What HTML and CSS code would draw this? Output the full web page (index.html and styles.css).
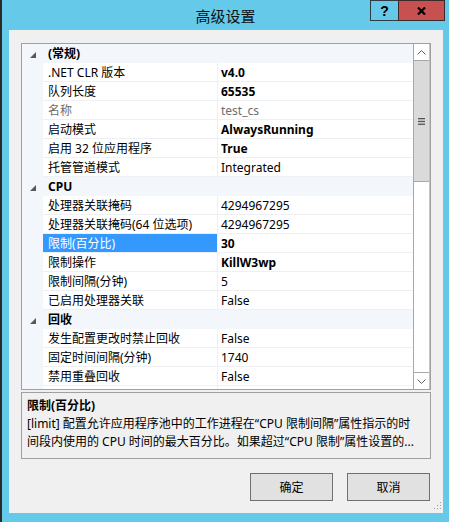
FILE: index.html
```html
<!DOCTYPE html>
<html lang="zh-CN">
<head>
<meta charset="utf-8">
<title>高级设置</title>
<link rel="stylesheet" href="styles.css">
</head>
<body>
<div class="window">
  <div class="titlebar">
    <div></div>
    <div class="title">高级设置</div>
    <div class="caption-buttons">
      <span class="cap help">?</span>
      <span class="cap close">
        <svg width="9" height="8" viewBox="0 0 9 8"><path d="M1 0.5 L8 7.5 M8 0.5 L1 7.5" stroke="#000" stroke-width="2.2" fill="none"/></svg>
      </span>
    </div>
  </div>

  <div class="client">
    <div class="grid">
      <div class="rows">
        <div class="cat">
          <span class="exp"><svg width="6" height="6" viewBox="0 0 6 6"><polygon points="6,0 6,6 0,6" fill="#595959"/></svg></span>
          <span class="label">(常规)</span>
        </div>
        <div class="prop"><span class="gutter"></span><span class="name">.NET CLR 版本</span><span class="val bold">v4.0</span></div>
        <div class="prop"><span class="gutter"></span><span class="name">队列长度</span><span class="val bold">65535</span></div>
        <div class="prop readonly"><span class="gutter"></span><span class="name">名称</span><span class="val">test_cs</span></div>
        <div class="prop"><span class="gutter"></span><span class="name">启动模式</span><span class="val bold">AlwaysRunning</span></div>
        <div class="prop"><span class="gutter"></span><span class="name">启用 32 位应用程序</span><span class="val bold">True</span></div>
        <div class="prop"><span class="gutter"></span><span class="name">托管管道模式</span><span class="val">Integrated</span></div>

        <div class="cat">
          <span class="exp"><svg width="6" height="6" viewBox="0 0 6 6"><polygon points="6,0 6,6 0,6" fill="#595959"/></svg></span>
          <span class="label">CPU</span>
        </div>
        <div class="prop"><span class="gutter"></span><span class="name">处理器关联掩码</span><span class="val">4294967295</span></div>
        <div class="prop"><span class="gutter"></span><span class="name">处理器关联掩码(64 位选项)</span><span class="val">4294967295</span></div>
        <div class="prop selected"><span class="gutter"></span><span class="name">限制(百分比)</span><span class="val bold">30</span></div>
        <div class="prop"><span class="gutter"></span><span class="name">限制操作</span><span class="val bold">KillW3wp</span></div>
        <div class="prop"><span class="gutter"></span><span class="name">限制间隔(分钟)</span><span class="val">5</span></div>
        <div class="prop"><span class="gutter"></span><span class="name">已启用处理器关联</span><span class="val">False</span></div>

        <div class="cat">
          <span class="exp"><svg width="6" height="6" viewBox="0 0 6 6"><polygon points="6,0 6,6 0,6" fill="#595959"/></svg></span>
          <span class="label">回收</span>
        </div>
        <div class="prop"><span class="gutter"></span><span class="name">发生配置更改时禁止回收</span><span class="val">False</span></div>
        <div class="prop"><span class="gutter"></span><span class="name">固定时间间隔(分钟)</span><span class="val">1740</span></div>
        <div class="prop"><span class="gutter"></span><span class="name">禁用重叠回收</span><span class="val">False</span></div>
        <div class="prop"><span class="gutter"></span><span class="name"></span><span class="val"></span></div>
      </div>

      <div class="vscroll">
        <div class="sb-btn up">
          <svg width="9" height="5" viewBox="0 0 9 5"><polyline points="0.5,4.5 4.5,0.5 8.5,4.5" stroke="#606060" fill="none"/></svg>
        </div>
        <div class="thumb">
          <svg width="7" height="7" viewBox="0 0 7 7"><rect x="0" y="0" width="7" height="1.3" fill="#555"/><rect x="0" y="2.8" width="7" height="1.3" fill="#555"/><rect x="0" y="5.6" width="7" height="1.3" fill="#555"/></svg>
        </div>
        <div class="track"></div>
        <div class="sb-btn down">
          <svg width="9" height="5" viewBox="0 0 9 5"><polyline points="0.5,0.5 4.5,4.5 8.5,0.5" stroke="#606060" fill="none"/></svg>
        </div>
      </div>
    </div>

    <div class="desc">
      <div class="desc-title">限制(百分比)</div>
      <div class="desc-line">[limit] 配置允许应用程序池中的工作进程在“CPU 限制间隔”属性指示的时</div>
      <div class="desc-line">间段内使用的 CPU 时间的最大百分比。如果超过“CPU 限制”属性设置的...</div>
    </div>

    <div class="actions">
      <button class="btn">确定</button>
      <button class="btn">取消</button>
    </div>

    <svg class="grip" width="10" height="10" viewBox="0 0 10 10">
      <rect x="8" y="0" width="1" height="1" fill="#a0a0a0"/>
      <rect x="5" y="3" width="1" height="1" fill="#a0a0a0"/>
      <rect x="8" y="3" width="1" height="1" fill="#a0a0a0"/>
      <rect x="2" y="6" width="1" height="1" fill="#a0a0a0"/>
      <rect x="5" y="6" width="1" height="1" fill="#a0a0a0"/>
      <rect x="8" y="6" width="1" height="1" fill="#a0a0a0"/>
    </svg>
  </div>
</div>
</body>
</html>
```

FILE: styles.css
```css
html, body {
  margin: 0;
  padding: 0;
}

body {
  width: 449px;
  height: 522px;
  overflow: hidden;
  font-family: "Noto Sans", "Noto Sans CJK SC", sans-serif;
  font-size: 12px;
  color: #000;
}

/* Window frame */
.window {
  height: 522px;
  box-sizing: border-box;
  border-left: 2px solid #2b2b2b;
  background: #65c9e9;
  display: flex;
  flex-direction: column;
}

.titlebar {
  flex: none;
  height: 30px;
  display: grid;
  grid-template-columns: 1fr auto 1fr;
}

.title {
  font-family: "Noto Sans CJK SC", sans-serif;
  font-size: 15px;
  line-height: 31px;
  color: #111;
}

.caption-buttons {
  justify-self: end;
  align-self: start;
  display: flex;
  margin-right: 4px;
}

.cap {
  height: 21px;
  box-sizing: border-box;
  border: 1px solid #2f3c44;
  display: flex;
  align-items: center;
  justify-content: center;
}

.help {
  width: 29px;
  font-family: "Liberation Sans", sans-serif;
  font-weight: bold;
  font-size: 14px;
  line-height: 1;
}

.close {
  width: 47px;
  margin-left: -1px;
  background: #c75050;
  border-color: #3e2a2a;
}

/* Dialog body */
.client {
  flex: 1;
  margin: 0 6px 9px 7px;
  background: #f0f0f0;
  position: relative;
  padding: 13px 12px 12px 12px;
  display: flex;
  flex-direction: column;
}

/* Property grid */
.grid {
  flex: none;
  height: 347px;
  box-sizing: border-box;
  border: 1px solid #a0a0a0;
  background: #fff;
  display: flex;
}

.rows {
  flex: 1;
  overflow: hidden;
}

.cat {
  height: 19px;
  display: flex;
  align-items: center;
  background: #f3f6fb;
  font-weight: bold;
  line-height: 18px;
  padding-top: 1px;
  box-sizing: border-box;
}

.cat .exp {
  width: 21px;
  box-sizing: border-box;
  padding-left: 8px;
  display: flex;
  align-items: center;
  padding-top: 1px;
}

.cat .label {
  padding-left: 5px;
}

.prop {
  height: 19px;
  display: grid;
  grid-template-columns: 21px 175px 1fr;
}

.gutter {
  background: #f3f6fb;
}

.name,
.val {
  height: 18px;
  line-height: 20px;
  border-bottom: 1px solid #eef0f4;
  white-space: nowrap;
  overflow: hidden;
}

.name {
  padding-left: 5px;
  border-right: 1px solid #eef0f4;
}

.val {
  padding-left: 3px;
}

.bold {
  font-weight: bold;
}

.readonly .name,
.readonly .val {
  color: #6d6d6d;
}

.selected .name {
  background: #3399ff;
  color: #fff;
}

/* Vertical scrollbar */
.vscroll {
  flex: none;
  width: 17px;
  box-sizing: border-box;
  border-left: 1px solid #a8a8a8;
  border-right: 1px solid #c4c4c4;
  display: flex;
  flex-direction: column;
}

.sb-btn {
  flex: none;
  height: 17px;
  box-sizing: border-box;
  background: #fff;
  display: flex;
  align-items: center;
  justify-content: center;
}

.sb-btn.up {
  border-bottom: 1px solid #a8a8a8;
}

.sb-btn.down {
  border-top: 1px solid #a8a8a8;
}

.thumb {
  flex: none;
  height: 121px;
  box-sizing: border-box;
  background: #dadada;
  border-bottom: 1px solid #a8a8a8;
  display: flex;
  align-items: center;
  justify-content: center;
}

.track {
  flex: 1;
  background: #fff;
}

/* Description panel */
.desc {
  flex: none;
  margin-top: 2px;
  height: 67px;
  box-sizing: border-box;
  border: 1px solid #a0a0a0;
  padding: 4px 5px 0 5px;
  line-height: 18px;
  overflow: hidden;
}

.desc-title {
  font-weight: bold;
}

.desc-line {
  white-space: nowrap;
  overflow: hidden;
}

/* Dialog buttons */
.actions {
  flex: none;
  display: flex;
  justify-content: flex-end;
  gap: 14px;
  margin-top: 14px;
  margin-right: 1px;
}

.btn {
  width: 83px;
  height: 28px;
  box-sizing: border-box;
  border: 1px solid #707070;
  background: #e1e1e1;
  font-family: "Noto Sans", "Noto Sans CJK SC", sans-serif;
  font-size: 12px;
  color: #000;
  padding: 0;
}

.grip {
  position: absolute;
  right: 1px;
  bottom: 1px;
}
```
